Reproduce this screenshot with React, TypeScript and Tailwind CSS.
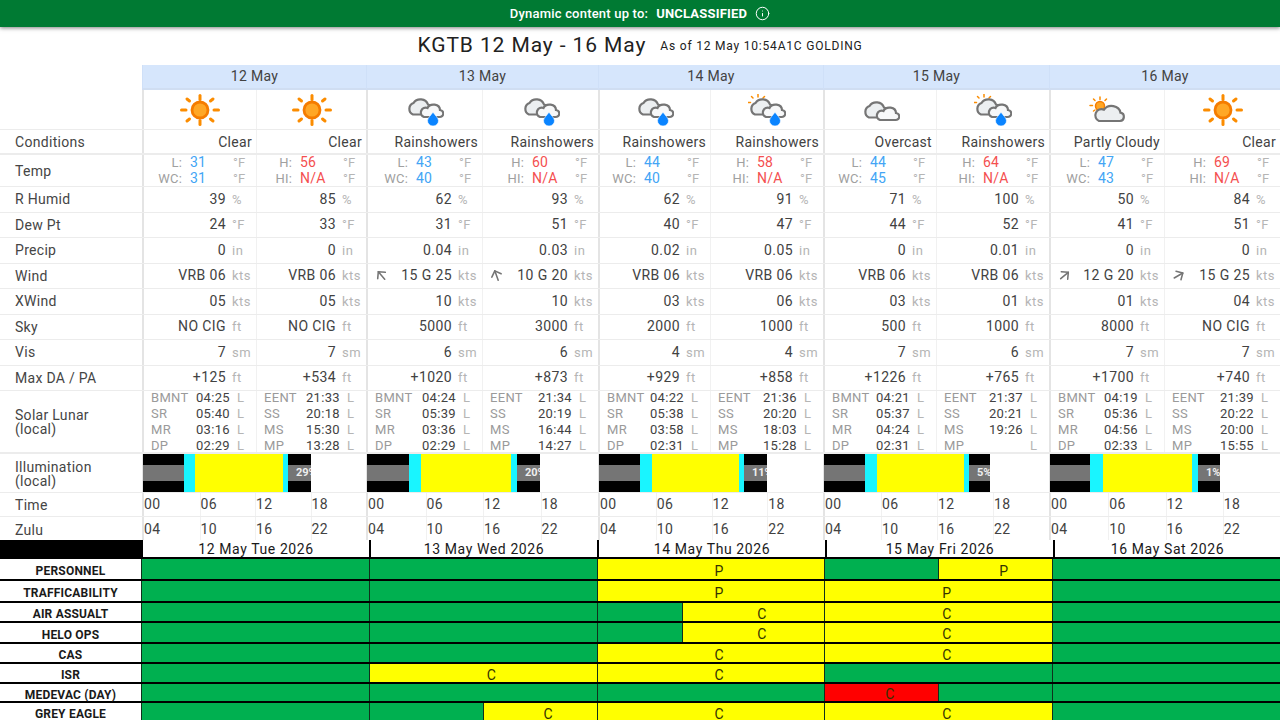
import type { ReactNode } from "react";
import { ArrowUp, Info } from "lucide-react";

const COLS = "grid-cols-[142px_114px_110px_116px_116px_112px_113px_113px_113px_115px_116px]";

function cellBorder(i: number) {
  return i % 2 === 0 ? "border-l-2 border-l-[#e4e4e4]" : "border-l border-l-[#f1f1f1]";
}

function CloudBack() {
  return (
    <path
      d="M7 16.500h14a5 5 0 0 0 1-10a8 7.500 0 0 0-14.500-1.500a6.200 6.200 0 0 0-0.500 11.500z"
      fill="#eceff1"
      stroke="#757575"
      strokeWidth="2.200"
    />
  );
}

function CloudFront() {
  return (
    <path
      d="M18 19h15.500a3.500 3.500 0 0 0 .5-7a6.500 5.500 0 0 0-12.500-2a4.700 4.700 0 0 0-3.500 9z"
      fill="#f7f8f9"
      stroke="#757575"
      strokeWidth="2.200"
    />
  );
}

function Drop() {
  return (
    <path
      d="M27 14c1.800 3.200 5.500 5.800 5.500 8.800a5.500 5.200 0 0 1-11 0c0-3 3.700-5.600 5.500-8.800z"
      fill="#0a84ff"
      stroke="#ffffff"
      strokeWidth="0.600"
    />
  );
}

function SmallSun() {
  return (
    <g stroke="#fb8c00" strokeWidth="1.500" strokeLinecap="round">
      <line x1="10" y1="0" x2="10" y2="2.500" />
      <line x1="3.500" y1="2" x2="5" y2="3.500" />
      <line x1="16.500" y1="2" x2="15" y2="3.500" />
      <line x1="0" y1="8" x2="2.500" y2="8" />
    </g>
  );
}

function WeatherIcon({ kind }: { kind: string }) {
  if (kind === "sun") {
    const rays = [
      [20, 1.500, 20, 5.500],
      [20, 26.500, 20, 30.500],
      [1.500, 16, 6, 16],
      [34, 16, 38.500, 16],
      [7, 5, 9.500, 7],
      [33, 5, 30.500, 7],
      [7, 27, 9.500, 25],
      [33, 27, 30.500, 25],
    ];
    return (
      <svg width="40" height="32" viewBox="0 0 40 32">
        {rays.map((r, i) => (
          <line key={i} x1={r[0]} y1={r[1]} x2={r[2]} y2={r[3]} stroke="#fb8c00" strokeWidth="3" strokeLinecap="round" />
        ))}
        <circle cx="20" cy="16" r="8" fill="#ffa726" stroke="#f57c00" strokeWidth="2.800" />
      </svg>
    );
  }
  if (kind === "partly") {
    return (
      <svg width="38" height="28" viewBox="0 0 38 28">
        <g stroke="#fb8c00" strokeWidth="1.500" strokeLinecap="round">
          <line x1="11" y1="1" x2="11" y2="3.500" />
          <line x1="4.500" y1="3" x2="6" y2="4.500" />
          <line x1="17.500" y1="3" x2="16" y2="4.500" />
          <line x1="1" y1="9.500" x2="3.500" y2="9.500" />
          <line x1="4.500" y1="15" x2="6" y2="14" />
        </g>
        <circle cx="11" cy="10" r="4.500" fill="#ffa726" stroke="#f57c00" strokeWidth="1.500" />
        <path
          d="M10 25h21a4.200 4.200 0 0 0 .5-8.300a9 8 0 0 0-16.500-3a6 6 0 0 0-5 11.300z"
          fill="#eceff1"
          stroke="#757575"
          strokeWidth="2.200"
        />
      </svg>
    );
  }
  return (
    <svg width="38" height="32" viewBox={kind === "cloud" ? "0 -7 38 32" : "0 -4 38 32"}>
      {kind === "sunrain" && (
        <g transform="translate(0 -3.500)">
          <SmallSun />
        </g>
      )}
      <CloudBack />
      <CloudFront />
      {kind !== "cloud" && <Drop />}
    </svg>
  );
}

function Row({ label, h, children }: { label: ReactNode; h: string; children: ReactNode }) {
  return (
    <div className={`grid ${COLS} ${h} border-b border-b-[#ececec]`}>
      <div className="flex items-center pl-[15px] text-[14px] leading-[14px] tracking-[0.3px] text-[#454545]">{label}</div>
      {children}
    </div>
  );
}

function ValueRow({ label, unit, values, h = "h-[25.500px]" }: { label: string; unit: string; values: string[]; h?: string }) {
  return (
    <Row label={label} h={h}>
      {values.map((v, i) => (
        <div key={i} className={`flex items-center justify-end ${cellBorder(i)}`}>
          <span className="text-[14px] tracking-[0.4px] text-[#424242]">{v}</span>
          <span className="ml-[6px] w-[24px] text-[13px] tracking-[0.5px] text-[#b5b5b5]">{unit}</span>
        </div>
      ))}
    </Row>
  );
}

const winds: [string, string][] = [
  ["", "VRB 06"], ["", "VRB 06"],
  ["-rotate-[40deg]", "15 G 25"], ["-rotate-[20deg]", "10 G 20"],
  ["", "VRB 06"], ["", "VRB 06"],
  ["", "VRB 06"], ["", "VRB 06"],
  ["rotate-[50deg]", "12 G 20"], ["rotate-[60deg]", "15 G 25"],
];

const icons = ["sun", "sun", "rain", "rain", "rain", "sunrain", "cloud", "sunrain", "partly", "sun"];
const conditions = ["Clear", "Clear", "Rainshowers", "Rainshowers", "Rainshowers", "Rainshowers", "Overcast", "Rainshowers", "Partly Cloudy", "Clear"];
const temps = [
  ["31", "31"], ["56", "N/A"], ["43", "40"], ["60", "N/A"], ["44", "40"],
  ["58", "N/A"], ["44", "45"], ["64", "N/A"], ["47", "43"], ["69", "N/A"],
];

const solar = [
  ["04:25", "05:40", "03:16", "02:29"], ["21:33", "20:18", "15:30", "13:28"],
  ["04:24", "05:39", "03:36", "02:29"], ["21:34", "20:19", "16:44", "14:27"],
  ["04:22", "05:38", "03:58", "02:31"], ["21:36", "20:20", "18:03", "15:28"],
  ["04:21", "05:37", "04:24", "02:31"], ["21:37", "20:21", "19:26", ""],
  ["04:19", "05:36", "04:56", "02:33"], ["21:39", "20:22", "20:00", "15:55"],
];
const solarAm = ["BMNT", "SR", "MR", "DP"];
const solarPm = ["EENT", "SS", "MS", "MP"];

const illumination: { segs: number[]; pct: string }[] = [
  { segs: [41, 11, 88, 5, 23], pct: "29%" },
  { segs: [42, 12, 90, 6, 23], pct: "20%" },
  { segs: [41, 12, 87, 5, 23], pct: "11%" },
  { segs: [41, 12, 87, 5, 21], pct: "5%" },
  { segs: [40, 13, 89, 6, 22], pct: "1%" },
];

function DarkSeg({ w, pct }: { w: number; pct?: string }) {
  return (
    <div className="flex items-center overflow-hidden bg-black" style={{ width: w }}>
      <div className="flex h-[16px] w-full items-center overflow-hidden whitespace-nowrap bg-[#757575] pl-2 text-[11px] font-bold text-[#eeeeee]">
        {pct}
      </div>
    </div>
  );
}

function IlluminationBar({ segs, pct }: { segs: number[]; pct: string }) {
  return (
    <div className="col-span-2 flex border-l border-l-[#e4e4e4]">
      <DarkSeg w={segs[0]} />
      <div className="bg-[#19f5ff]" style={{ width: segs[1] }} />
      <div className="bg-[#ffff00]" style={{ width: segs[2] }} />
      <div className="bg-[#19f5ff]" style={{ width: segs[3] }} />
      <DarkSeg w={segs[4]} pct={pct} />
    </div>
  );
}

function HoursRow({ label, hours, h, shift = "" }: { label: ReactNode; hours: string[]; h: string; shift?: string }) {
  return (
    <Row label={label} h={h}>
      {[0, 1, 2, 3, 4].map((d) => (
        <div key={d} className="col-span-2 grid grid-cols-4 border-l-2 border-l-[#e4e4e4]">
          {hours.map((t, i) => (
            <div key={t} className={`flex items-center text-[14px] tracking-[0.4px] text-[#424242] ${shift} ${i > 0 ? "border-l border-l-[#f1f1f1]" : ""}`}>
              {t}
            </div>
          ))}
        </div>
      ))}
    </Row>
  );
}

type Seg = { span: string; color: string; mark?: string };
const G = "bg-[#00b050]";
const Y = "bg-[#ffff00]";
const R = "bg-[#ff0000]";

const day = (color: string, mark?: string): Seg => ({ span: "col-span-8", color, mark });

const ccir: { label: string; h: string; segs: Seg[] }[] = [
  {
    label: "PERSONNEL",
    h: "h-[22px]",
    segs: [day(G), day(G), day(Y, "P"), { span: "col-span-4", color: G }, { span: "col-span-4", color: Y, mark: "P" }, day(G)],
  },
  { label: "TRAFFICABILITY", h: "h-[22px]", segs: [day(G), day(G), day(Y, "P"), day(Y, "P"), day(G)] },
  {
    label: "AIR ASSUALT",
    h: "h-[20px]",
    segs: [day(G), day(G), { span: "col-span-3", color: G }, { span: "col-span-5", color: Y, mark: "C" }, day(Y, "C"), day(G)],
  },
  {
    label: "HELO OPS",
    h: "h-[21px]",
    segs: [day(G), day(G), { span: "col-span-3", color: G }, { span: "col-span-5", color: Y, mark: "C" }, day(Y, "C"), day(G)],
  },
  { label: "CAS", h: "h-[20px]", segs: [day(G), day(G), day(Y, "C"), day(Y, "C"), day(G)] },
  { label: "ISR", h: "h-[20px]", segs: [day(G), day(Y, "C"), day(Y, "C"), day(G), day(G)] },
  {
    label: "MEDEVAC (DAY)",
    h: "h-[19px]",
    segs: [day(G), day(G), day(G), { span: "col-span-4", color: R, mark: "C" }, { span: "col-span-4", color: G }, day(G)],
  },
  {
    label: "GREY EAGLE",
    h: "h-[20px]",
    segs: [day(G), { span: "col-span-4", color: G }, { span: "col-span-4", color: Y, mark: "C" }, day(Y, "C"), day(Y, "C"), day(G)],
  },
];

export default function App() {
  return (
    <div className="h-[720px] w-[1280px] overflow-hidden bg-white font-[Roboto,sans-serif]">
      <div className="relative z-10 flex h-[27px] items-center justify-center gap-2 bg-[#007a33] text-[13px] font-medium tracking-[0.2px] text-white shadow-[0_1px_4px_rgba(0,0,0,0.5)]">
        <span>Dynamic content up to:</span>
        <span className="font-bold">UNCLASSIFIED</span>
        <Info size={15} strokeWidth={1.600} />
      </div>

      <div className="flex h-[38px] items-center justify-center gap-[14px] text-[#212121]">
        <span className="text-[21px] tracking-[0.9px]">KGTB 12 May - 16 May</span>
        <span className="text-[12px] tracking-[0.8px]">As of 12 May 10:54A1C GOLDING</span>
      </div>

      <div className={`grid ${COLS} h-[25px]`}>
        <div />
        {["12 May", "13 May", "14 May", "15 May", "16 May"].map((d) => (
          <div key={d} className="col-span-2 flex items-center justify-center border-l border-l-[#cfe0f8] border-b-2 border-b-[#d0def2] bg-[#d6e6fc] text-[14px] tracking-[0.3px] text-[#424242]">
            {d}
          </div>
        ))}
      </div>

      <Row label="" h="h-[40px]">
        {icons.map((k, i) => (
          <div key={i} className={`flex items-center justify-center ${cellBorder(i)}`}>
            <WeatherIcon kind={k} />
          </div>
        ))}
      </Row>

      <Row label="Conditions" h="h-[25px] border-b-2">
        {conditions.map((c, i) => (
          <div key={i} className={`flex items-center justify-end pt-[1px] pr-1 text-[14px] tracking-[0.3px] text-[#424242] ${cellBorder(i)}`}>
            {c}
          </div>
        ))}
      </Row>

      <Row label="Temp" h="h-[32px]">
        {temps.map((t, i) => (
          <div key={i} className={`flex flex-col justify-center text-[13px] leading-[15.500px] tracking-[0.2px] ${cellBorder(i)}`}>
            {[0, 1].map((line) => (
              <div key={line} className="flex">
                <span className="flex-1 pr-2 text-right text-[#a0a0a0]">
                  {i % 2 === 0 ? (line === 0 ? "L:" : "WC:") : line === 0 ? "H:" : "HI:"}
                </span>
                <span className={`w-[43px] text-[14px] ${i % 2 === 0 ? "text-[#42a5f5]" : "text-[#f44f4f]"}`}>{t[line]}</span>
                <span className="w-[23px] text-[#b5b5b5]">°F</span>
              </div>
            ))}
          </div>
        ))}
      </Row>

      <ValueRow label="R Humid" unit="%" values={["39", "85", "62", "93", "62", "91", "71", "100", "50", "84"]} />
      <ValueRow label="Dew Pt" unit="°F" values={["24", "33", "31", "51", "40", "47", "44", "52", "41", "51"]} />
      <ValueRow label="Precip" unit="in" values={["0", "0", "0.04", "0.03", "0.02", "0.05", "0", "0.01", "0", "0"]} />

      <Row label="Wind" h="h-[25.500px]">
        {winds.map(([rot, v], i) => (
          <div key={i} className={`flex items-center justify-end ${cellBorder(i)}`}>
            {rot && <ArrowUp size={17} strokeWidth={2.200} className={`mr-auto ml-[5px] text-[#757575] ${rot}`} />}
            <span className="text-[14px] tracking-[0.4px] text-[#424242]">{v}</span>
            <span className="ml-[6px] w-[24px] text-[13px] tracking-[0.5px] text-[#b5b5b5]">kts</span>
          </div>
        ))}
      </Row>

      <ValueRow label="XWind" unit="kts" values={["05", "05", "10", "10", "03", "06", "03", "01", "01", "04"]} />
      <ValueRow label="Sky" unit="ft" values={["NO CIG", "NO CIG", "5000", "3000", "2000", "1000", "500", "1000", "8000", "NO CIG"]} />
      <ValueRow label="Vis" unit="sm" values={["7", "7", "6", "6", "4", "4", "7", "6", "7", "7"]} />
      <ValueRow label="Max DA / PA" unit="ft" values={["+125", "+534", "+1020", "+873", "+929", "+858", "+1226", "+765", "+1700", "+740"]} />

      <Row label={<span className="block pt-[1px]">Solar Lunar<br />(local)</span>} h="h-[63px] grid-rows-[61px] border-b-2">
        {solar.map((times, i) => (
          <div key={i} className={`flex flex-col justify-center pl-[7px] text-[13px] leading-[16px] tracking-[0.3px] ${cellBorder(i)}`}>
            {times.map((t, j) => (
              <div key={j} className="flex shrink-0">
                <span className="flex-1 text-[#9a9a9a]">{(i % 2 === 0 ? solarAm : solarPm)[j]}</span>
                <span className="w-[41px] text-[#424242]">{t}</span>
                <span className="w-[19px] text-[#b5b5b5]">L</span>
              </div>
            ))}
          </div>
        ))}
      </Row>

      <Row label={<span className="block pt-[1px]">Illumination<br />(local)</span>} h="h-[39px]">
        {illumination.map((b) => (
          <IlluminationBar key={b.pct} segs={b.segs} pct={b.pct} />
        ))}
      </Row>

      <HoursRow label="Time" hours={["00", "06", "12", "18"]} h="h-[24px]" />
      <HoursRow label={<span className="block pt-[2px]">Zulu</span>} hours={["04", "10", "16", "22"]} h="h-[23px] border-b-0" shift="pt-[2px]" />

      <div className="grid h-[19px] grid-cols-[141px_228px_228px_228px_228px_227px] border-b-2 border-b-black">
        <div className="bg-black" />
        {["12 May Tue 2026", "13 May Wed 2026", "14 May Thu 2026", "15 May Fri 2026", "16 May Sat 2026"].map((d) => (
          <div key={d} className="flex items-center justify-center border-l-2 border-l-black pt-[1px] text-[14px] leading-none tracking-[0.6px] text-[#1a1a1a]">
            {d}
          </div>
        ))}
      </div>

      {ccir.map((row) => (
        <div key={row.label} className={`grid grid-cols-[141px_repeat(40,minmax(0,1fr))] border-b-2 border-b-black ${row.h}`}>
          <div className="flex items-center justify-center pt-[4px] text-[12px] leading-none font-bold tracking-[0.2px] text-[#1a1a1a]">{row.label}</div>
          {row.segs.map((s, i) => (
            <div key={i} className={`flex items-center justify-center border-l border-l-[#10301c] pt-[3px] pl-4 text-[14px] leading-none text-[#333300] ${s.span} ${s.color}`}>
              {s.mark}
            </div>
          ))}
        </div>
      ))}
    </div>
  );
}
